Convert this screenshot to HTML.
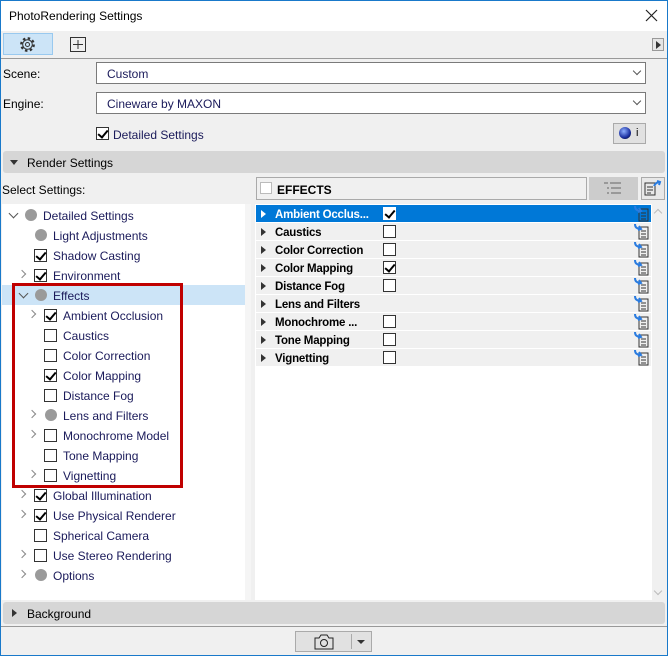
<!DOCTYPE html>
<html><head><style>
*{margin:0;padding:0;box-sizing:border-box}
body{width:668px;height:656px;position:relative;overflow:hidden;background:#f0f0f0;font-family:"Liberation Sans",sans-serif;font-size:12px;color:#000}
.a{position:absolute}
.cb{position:absolute;width:13px;height:13px;border:1px solid #333;background:#fff}
.ck::after{content:"";position:absolute;left:3px;top:0px;width:4px;height:8px;border:solid #000;border-width:0 2px 2px 0;transform:rotate(40deg)}
.dot{position:absolute;width:12px;height:12px;border-radius:50%;background:#9a9a9a}
.chv{position:absolute;width:6px;height:6px;border:solid #888;border-width:0 1.5px 1.5px 0;transform:rotate(-45deg)}
.chd{position:absolute;width:7px;height:7px;border:solid #444;border-width:0 2px 2px 0;transform:rotate(45deg)}
.t{position:absolute;color:#1a1a5a;white-space:nowrap}
.tri{position:absolute;width:0;height:0;border-top:4px solid transparent;border-bottom:4px solid transparent;border-left:5px solid #333}
.rr{position:absolute;left:256px;width:395px;height:17px;background:#f0f0f0}
.rr b{position:absolute;left:19px;top:4px;color:#000;font-size:11.5px;letter-spacing:-0.2px}
</style></head><body>
<div class="a" style="left:0;top:0;width:668px;height:656px;border:1px solid #1979ca"></div>
<div class="a" style="left:1px;top:1px;width:666px;height:30px;background:#fff"></div>
<div class="a" style="left:9px;top:9px;font-size:12px">PhotoRendering Settings</div>
<svg class="a" style="left:645px;top:9px" width="13" height="13"><path d="M1 1l11 11M12 1L1 12" stroke="#222" stroke-width="1.2"/></svg>
<div class="a" style="left:3px;top:33px;width:50px;height:22px;background:#cce4f7;border:1px solid #99c9ef"></div>
<svg class="a" style="left:19px;top:36px" width="17" height="17" viewBox="0 0 17 17"><circle cx="8.5" cy="8.5" r="6.3" fill="none" stroke="#333" stroke-width="2.2" stroke-dasharray="2.5 2.45"/><circle cx="8.5" cy="8.5" r="4.8" fill="#cce4f7" stroke="#333"/><circle cx="8.5" cy="8.5" r="2" fill="none" stroke="#333"/></svg>
<svg class="a" style="left:70px;top:37px" width="16" height="15"><rect x="0.5" y="0.5" width="15" height="14" fill="none" stroke="#333"/><path d="M8 3v9M3 7.5h10" stroke="#333"/></svg>
<div class="a" style="left:652px;top:38px;width:12px;height:13px;border:1px solid #999;background:#e5e5e5"></div>
<div class="tri" style="left:656px;top:41px"></div>
<div class="a" style="left:1px;top:58px;width:666px;height:1px;background:#999"></div>
<div class="a" style="left:3px;top:67px">Scene:</div>
<div class="a" style="left:3px;top:97px">Engine:</div>
<div class="a" style="left:96px;top:62px;width:550px;height:22px;background:#fff;border:1px solid #7a7a7a"></div>
<div class="a" style="left:107px;top:67px;color:#1a1a5a">Custom</div>
<div class="a" style="left:96px;top:92px;width:550px;height:22px;background:#fff;border:1px solid #7a7a7a"></div>
<div class="a" style="left:107px;top:97px;color:#1a1a5a">Cineware by MAXON</div>
<div class="chd" style="left:634px;top:68px;width:6px;height:6px;border-color:#555;border-width:0 1px 1px 0"></div>
<div class="chd" style="left:634px;top:98px;width:6px;height:6px;border-color:#555;border-width:0 1px 1px 0"></div>
<div class="cb ck" style="left:96px;top:127px"></div>
<div class="a" style="left:113px;top:128px;color:#1a1a5a">Detailed Settings</div>
<div class="a" style="left:613px;top:123px;width:33px;height:21px;border:1px solid #aaa;background:#e1e1e1"></div>
<div class="a" style="left:619px;top:127px;width:12px;height:12px;border-radius:50%;background:radial-gradient(circle at 40% 35%,#8fb0ff,#1b2fa0 60%,#000)"></div>
<div class="a" style="left:636px;top:127px;font-size:11px">i</div>
<div class="a" style="left:3px;top:151px;width:662px;height:22px;background:#d6d6d6;border-radius:3px"></div>
<div class="a" style="left:10px;top:160px;border-left:4px solid transparent;border-right:4px solid transparent;border-top:5px solid #333"></div>
<div class="a" style="left:27px;top:156px">Render Settings</div>
<div class="a" style="left:2px;top:183px">Select Settings:</div>
<div class="a" style="left:256px;top:177px;width:331px;height:23px;border:1px solid #aaa;background:#f0f0f0"></div>
<div class="a" style="left:260px;top:182px;width:12px;height:12px;border:1px solid #bbb;background:#fff"></div>
<div class="a" style="left:277px;top:183px;font-weight:bold">EFFECTS</div>
<div class="a" style="left:589px;top:177px;width:49px;height:23px;background:#ccc"></div>
<svg class="a" style="left:603px;top:182px" width="20" height="13"><path d="M1 1h4M7 1h11M4 6h2M8 6h10M4 11h2M8 11h10" stroke="#999" stroke-width="2"/></svg>
<div class="a" style="left:641px;top:177px;width:24px;height:23px;border:1px solid #aaa;background:#e8e8e8"></div>
<svg class="a" style="left:644px;top:180px" width="18" height="17"><rect x="1" y="3" width="10" height="12" fill="none" stroke="#333"/><path d="M3 7h6M3 10h6M3 13h4" stroke="#333"/><path d="M10 6q2-4 6-4M13 1l3 1-1 3" stroke="#2a7ce0" stroke-width="2" fill="none"/></svg>
<div class="a" style="left:2px;top:204px;width:243px;height:396px;background:#fff"></div>
<div class="a" style="left:245px;top:204px;width:6px;height:396px;background:#f5f5f5"></div>
<div class="a" style="left:2px;top:285px;width:243px;height:20px;background:#cce4f7"></div>
<div class="chd" style="left:10px;top:210px;border-color:#555;border-width:0 1.5px 1.5px 0"></div><div class="dot" style="left:25px;top:209px"></div><div class="t" style="left:43px;top:209px">Detailed Settings</div>
<div class="dot" style="left:35px;top:229px"></div><div class="t" style="left:53px;top:229px">Light Adjustments</div>
<div class="cb ck" style="left:34px;top:249px"></div><div class="t" style="left:53px;top:249px">Shadow Casting</div>
<div class="chv" style="left:19px;top:271px"></div><div class="cb ck" style="left:34px;top:269px"></div><div class="t" style="left:53px;top:269px">Environment</div>
<div class="chd" style="left:20px;top:290px;border-color:#555;border-width:0 1.5px 1.5px 0"></div><div class="dot" style="left:35px;top:289px"></div><div class="t" style="left:53px;top:289px">Effects</div>
<div class="chv" style="left:29px;top:311px"></div><div class="cb ck" style="left:44px;top:309px"></div><div class="t" style="left:63px;top:309px">Ambient Occlusion</div>
<div class="cb" style="left:44px;top:329px"></div><div class="t" style="left:63px;top:329px">Caustics</div>
<div class="cb" style="left:44px;top:349px"></div><div class="t" style="left:63px;top:349px">Color Correction</div>
<div class="cb ck" style="left:44px;top:369px"></div><div class="t" style="left:63px;top:369px">Color Mapping</div>
<div class="cb" style="left:44px;top:389px"></div><div class="t" style="left:63px;top:389px">Distance Fog</div>
<div class="chv" style="left:29px;top:411px"></div><div class="dot" style="left:45px;top:409px"></div><div class="t" style="left:63px;top:409px">Lens and Filters</div>
<div class="chv" style="left:29px;top:431px"></div><div class="cb" style="left:44px;top:429px"></div><div class="t" style="left:63px;top:429px">Monochrome Model</div>
<div class="cb" style="left:44px;top:449px"></div><div class="t" style="left:63px;top:449px">Tone Mapping</div>
<div class="chv" style="left:29px;top:471px"></div><div class="cb" style="left:44px;top:469px"></div><div class="t" style="left:63px;top:469px">Vignetting</div>
<div class="chv" style="left:19px;top:491px"></div><div class="cb ck" style="left:34px;top:489px"></div><div class="t" style="left:53px;top:489px">Global Illumination</div>
<div class="chv" style="left:19px;top:511px"></div><div class="cb ck" style="left:34px;top:509px"></div><div class="t" style="left:53px;top:509px">Use Physical Renderer</div>
<div class="cb" style="left:34px;top:529px"></div><div class="t" style="left:53px;top:529px">Spherical Camera</div>
<div class="chv" style="left:19px;top:551px"></div><div class="cb" style="left:34px;top:549px"></div><div class="t" style="left:53px;top:549px">Use Stereo Rendering</div>
<div class="chv" style="left:19px;top:571px"></div><div class="dot" style="left:35px;top:569px"></div><div class="t" style="left:53px;top:569px">Options</div>
<div class="a" style="left:12px;top:283px;width:171px;height:205px;border:3px solid #c00000"></div>
<div class="a" style="left:255px;top:204px;width:397px;height:396px;background:#fff"></div>
<div class="a" style="left:652px;top:204px;width:14px;height:396px;background:#f0f0f0"></div>
<div class="a" style="left:655px;top:210px;width:6px;height:6px;border:solid #bbb;border-width:1px 0 0 1px;transform:rotate(45deg)"></div>
<div class="a" style="left:655px;top:588px;width:6px;height:6px;border:solid #bbb;border-width:0 1px 1px 0;transform:rotate(45deg)"></div>
<div class="rr" style="top:205px;background:#0078d7"><b style="color:#fff">Ambient Occlus...</b></div>
<div class="rr" style="top:223px"><b>Caustics</b></div>
<div class="rr" style="top:241px"><b>Color Correction</b></div>
<div class="rr" style="top:259px"><b>Color Mapping</b></div>
<div class="rr" style="top:277px"><b>Distance Fog</b></div>
<div class="rr" style="top:295px"><b>Lens and Filters</b></div>
<div class="rr" style="top:313px"><b>Monochrome ...</b></div>
<div class="rr" style="top:331px"><b>Tone Mapping</b></div>
<div class="rr" style="top:349px"><b>Vignetting</b></div>
<div class="tri" style="left:261px;top:210px;border-left-color:#fff"></div>
<div class="tri" style="left:261px;top:228px"></div><div class="tri" style="left:261px;top:246px"></div><div class="tri" style="left:261px;top:264px"></div><div class="tri" style="left:261px;top:282px"></div><div class="tri" style="left:261px;top:300px"></div><div class="tri" style="left:261px;top:318px"></div><div class="tri" style="left:261px;top:336px"></div><div class="tri" style="left:261px;top:354px"></div>
<div class="cb ck" style="left:383px;top:207px;border-color:#fff"></div>
<div class="cb" style="left:383px;top:225px"></div><div class="cb" style="left:383px;top:243px"></div><div class="cb ck" style="left:383px;top:261px"></div><div class="cb" style="left:383px;top:279px"></div><div class="cb" style="left:383px;top:315px"></div><div class="cb" style="left:383px;top:333px"></div><div class="cb" style="left:383px;top:351px"></div>
<svg class="a" style="left:634px;top:205px" width="18" height="162">
<defs><g id="ic"><rect x="5" y="4" width="9" height="12" fill="none" stroke="#333"/><path d="M7 8h5M7 11h5M7 14h5" stroke="#333"/><path d="M1 1q0 5 6 5M5 3l2 3-3 1" stroke="#2a7ce0" stroke-width="2" fill="none"/></g></defs>
<use href="#ic" y="0"/><use href="#ic" y="18"/><use href="#ic" y="36"/><use href="#ic" y="54"/><use href="#ic" y="72"/><use href="#ic" y="90"/><use href="#ic" y="108"/><use href="#ic" y="126"/><use href="#ic" y="144"/>
</svg>
<div class="a" style="left:3px;top:602px;width:662px;height:22px;background:#d6d6d6;border-radius:3px"></div>
<div class="tri" style="left:12px;top:609px"></div>
<div class="a" style="left:27px;top:607px">Background</div>
<div class="a" style="left:1px;top:626px;width:666px;height:1px;background:#999"></div>
<div class="a" style="left:295px;top:631px;width:77px;height:21px;border:1px solid #aaa;background:#e1e1e1"></div>
<div class="a" style="left:351px;top:634px;width:1px;height:15px;background:#aaa"></div>
<svg class="a" style="left:314px;top:633px" width="20" height="17"><path d="M1 5h4l2-3h6l2 3h4v11H1z" fill="none" stroke="#222"/><circle cx="10" cy="10" r="3.5" fill="none" stroke="#222"/></svg>
<div class="a" style="left:357px;top:640px;border-left:4px solid transparent;border-right:4px solid transparent;border-top:4px solid #333"></div>
</body></html>
